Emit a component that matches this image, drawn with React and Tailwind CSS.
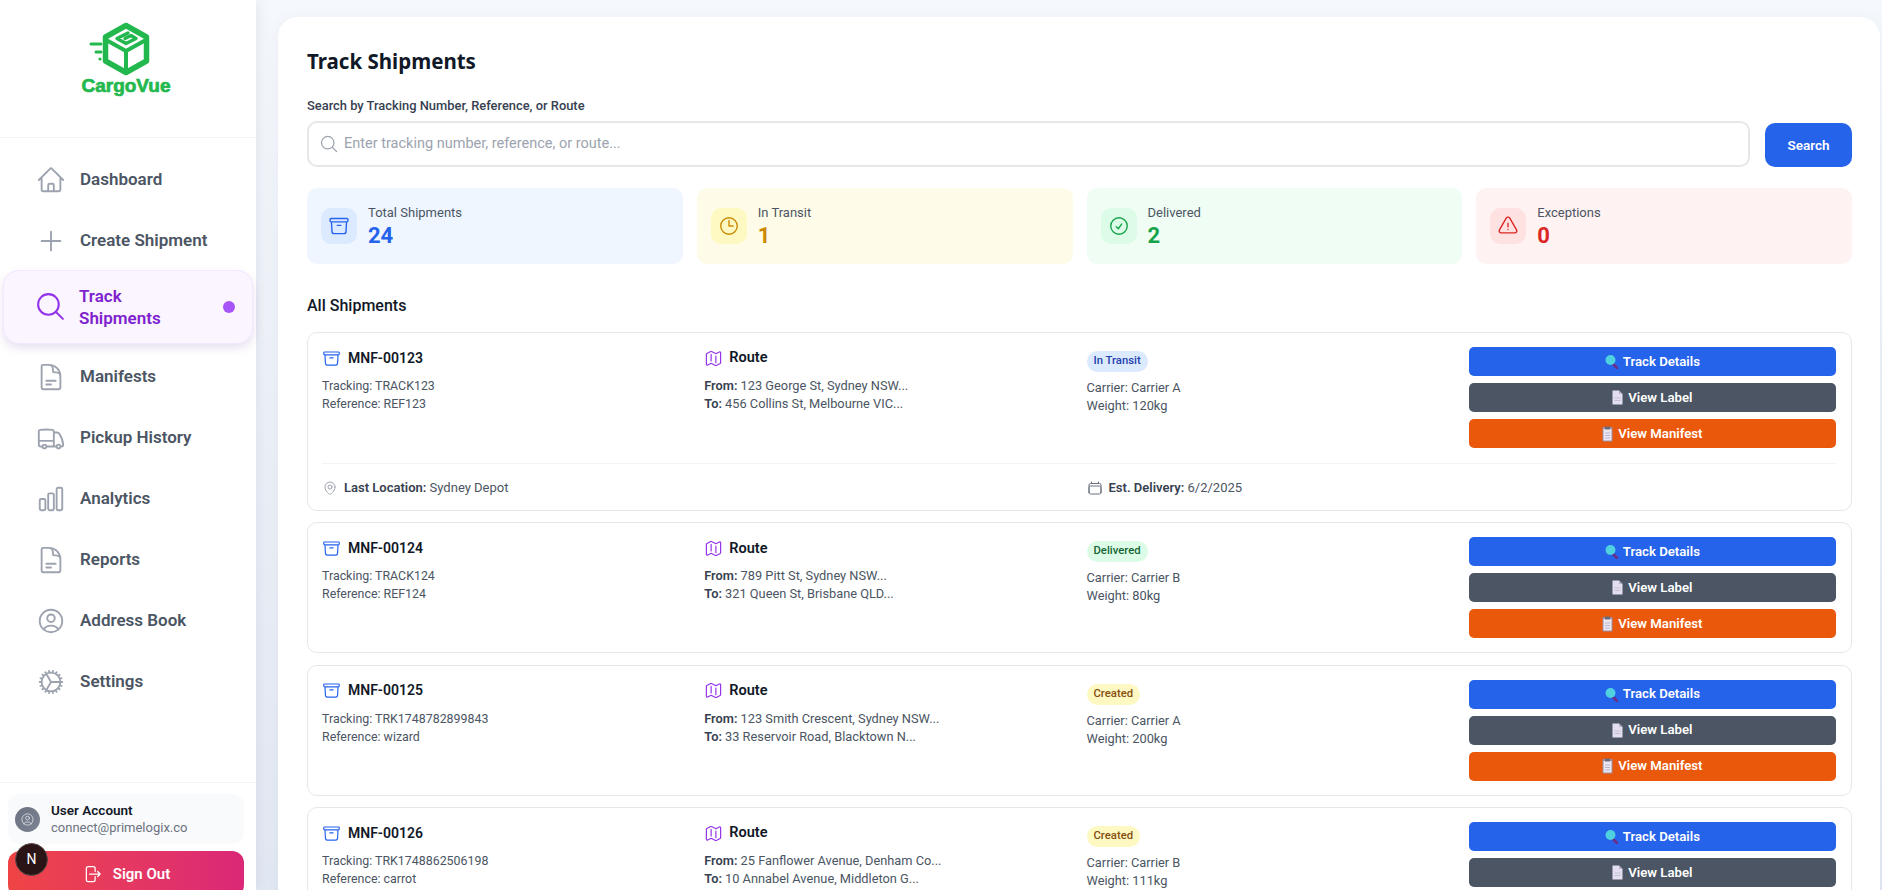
import {
  HiOutlineHome,
  HiOutlinePlus,
  HiOutlineMagnifyingGlass,
  HiOutlineDocumentText,
  HiOutlineTruck,
  HiOutlineChartBar,
  HiOutlineUserCircle,
  HiOutlineCog,
  HiOutlineArchiveBox,
  HiOutlineClock,
  HiOutlineCheckCircle,
  HiOutlineExclamationTriangle,
  HiOutlineMap,
  HiOutlineMapPin,
  HiOutlineCalendar,
  HiOutlineArrowRightOnRectangle,
} from 'react-icons/hi2';

const navItems = [
  { label: 'Dashboard', icon: HiOutlineHome },
  { label: 'Create Shipment', icon: HiOutlinePlus },
  { label: 'Track Shipments', icon: HiOutlineMagnifyingGlass, active: true },
  { label: 'Manifests', icon: HiOutlineDocumentText },
  { label: 'Pickup History', icon: HiOutlineTruck },
  { label: 'Analytics', icon: HiOutlineChartBar },
  { label: 'Reports', icon: HiOutlineDocumentText },
  { label: 'Address Book', icon: HiOutlineUserCircle },
  { label: 'Settings', icon: HiOutlineCog },
];

const stats = [
  { label: 'Total Shipments', value: '24', icon: HiOutlineArchiveBox, bg: 'bg-[#eff6ff]', box: 'bg-[#dbeafe]', color: 'text-[#2563eb]' },
  { label: 'In Transit', value: '1', icon: HiOutlineClock, bg: 'bg-[#fefce8]', box: 'bg-[#fef9c3]', color: 'text-[#ca8a04]' },
  { label: 'Delivered', value: '2', icon: HiOutlineCheckCircle, bg: 'bg-[#f0fdf4]', box: 'bg-[#dcfce7]', color: 'text-[#16a34a]' },
  { label: 'Exceptions', value: '0', icon: HiOutlineExclamationTriangle, bg: 'bg-[#fef2f2]', box: 'bg-[#fee2e2]', color: 'text-[#dc2626]' },
];

const shipments = [
  {
    id: 'MNF-00123',
    tracking: 'TRACK123',
    reference: 'REF123',
    from: '123 George St, Sydney NSW...',
    to: '456 Collins St, Melbourne VIC...',
    status: 'In Transit',
    statusClass: 'bg-[#dbeafe] text-[#1e40af]',
    carrier: 'Carrier A',
    weight: '120kg',
    location: 'Sydney Depot',
    delivery: '6/2/2025',
  },
  {
    id: 'MNF-00124',
    tracking: 'TRACK124',
    reference: 'REF124',
    from: '789 Pitt St, Sydney NSW...',
    to: '321 Queen St, Brisbane QLD...',
    status: 'Delivered',
    statusClass: 'bg-[#dcfce7] text-[#166534]',
    carrier: 'Carrier B',
    weight: '80kg',
  },
  {
    id: 'MNF-00125',
    tracking: 'TRK1748782899843',
    reference: 'wizard',
    from: '123 Smith Crescent, Sydney NSW...',
    to: '33 Reservoir Road, Blacktown N...',
    status: 'Created',
    statusClass: 'bg-[#fef9c3] text-[#854d0e]',
    carrier: 'Carrier A',
    weight: '200kg',
  },
  {
    id: 'MNF-00126',
    tracking: 'TRK1748862506198',
    reference: 'carrot',
    from: '25 Fanflower Avenue, Denham Co...',
    to: '10 Annabel Avenue, Middleton G...',
    status: 'Created',
    statusClass: 'bg-[#fef9c3] text-[#854d0e]',
    carrier: 'Carrier B',
    weight: '111kg',
  },
];

const Logo = () => (
  <svg width="100" height="56" viewBox="0 0 100 56" fill="none" stroke="#22b84e" strokeLinejoin="round" strokeLinecap="round">
    <path d="M50 5.5 L70.5 17 V41 L50 52.5 L29.5 41 V17 Z" strokeWidth="5.5" />
    <path d="M32 21 L50 31 L68 21 M50 31 V50" strokeWidth="4" />
    <path d="M52 13 L41 18.5 L50 23.5 L60 18.5 L55 15.5 L49 18.5" strokeWidth="3.4" />
    <path d="M15 24 H25 M20 32 H25" strokeWidth="3" />
    <circle cx="24" cy="39" r="1.6" fill="#22b84e" stroke="none" />
  </svg>
);

const TrackEmoji = () => (
  <svg width="13" height="15" viewBox="0 0 13 15">
    <path d="M7.5 9.5 L12 14" stroke="#6b2f86" strokeWidth="2.6" strokeLinecap="round" />
    <circle cx="5.5" cy="6" r="5" fill="#4fd1e0" />
  </svg>
);

const LabelEmoji = () => (
  <svg width="11" height="15" viewBox="0 0 11 15">
    <path d="M0.5 0.5 H7 L10.5 4 V14.5 H0.5 Z" fill="#e4dff0" />
    <path d="M7 0.5 V4 H10.5 Z" fill="#b9b2cc" />
    <path d="M2.5 8 H8.5 M2.5 10.5 H8.5" stroke="#c5bfd6" strokeWidth="1" />
  </svg>
);

const ManifestEmoji = () => (
  <svg width="11" height="16" viewBox="0 0 11 16">
    <rect x="0.5" y="1" width="10" height="14.5" rx="1" fill="#9a8fa6" />
    <rect x="1.5" y="3" width="8" height="11.5" fill="#ece8f2" />
    <rect x="3" y="0.5" width="5" height="3" fill="#6f6a78" />
    <path d="M3 7 H8 M3 9.5 H8 M3 12 H8" stroke="#b9b2cc" strokeWidth="1" />
  </svg>
);

const NavItem = ({ item }) => {
  const Icon = item.icon;
  if (item.active) {
    return (
      <div className="mx-[3px] -mt-[1.5px] mb-[2.5px] h-[74px] flex items-center pl-[30px] pr-[17px] rounded-[16px] bg-[#faf5ff] border border-[#f3e8ff] shadow-[0_4px_10px_rgba(88,28,135,0.14)]">
        <Icon className="w-[33px] h-[33px] text-[#9333ea] shrink-0" />
        <span className="ml-[12px] w-[100px] text-[17px] leading-[22px] font-semibold text-[#7e22ce]">{item.label}</span>
        <span className="ml-auto w-3 h-3 rounded-full bg-[#a855f7]" />
      </div>
    );
  }
  return (
    <div className="h-[61.1px] flex items-center pl-[36px]">
      <Icon className="w-[30px] h-[30px] text-[#9ca3af] shrink-0" />
      <span className="ml-[14px] text-[17px] font-semibold text-[#4b5563]">{item.label}</span>
    </div>
  );
};

const Sidebar = () => (
  <aside className="relative w-[256px] h-full shrink-0 bg-white flex flex-col shadow-[2px_0_12px_rgba(100,116,139,0.12)]">
    <div className="h-[138px] shrink-0 border-b border-[#f3f4f6] flex flex-col items-center pt-[20px] pr-[4px]">
      <Logo />
      <span className="-mt-[2px] font-['Liberation_Sans',sans-serif] text-[19px] leading-[24px] font-bold text-[#22b84e] [-webkit-text-stroke:0.7px_#22b84e]">CargoVue</span>
    </div>
    <nav className="pt-[11px] flex-1">
      {navItems.map((item) => (
        <NavItem key={item.label} item={item} />
      ))}
    </nav>
    <div className="border-t border-[#f3f4f6] h-[108px] shrink-0 pl-[8px] pr-[12px] pt-[11px]">
      <div className="h-[50px] rounded-xl bg-[#f9fafb] flex items-center pl-[7px]">
        <div className="w-[25px] h-[25px] rounded-full bg-gradient-to-br from-[#6b7280] to-[#7b8494] flex items-center justify-center">
          <HiOutlineUserCircle className="w-[15px] h-[15px] text-[#d1d5db]" />
        </div>
        <div className="ml-[11px]">
          <div className="text-[13.5px] leading-[18px] font-semibold text-[#111827]">User Account</div>
          <div className="text-[13px] leading-[18px] text-[#6b7280]">connect@primelogix.co</div>
        </div>
      </div>
      <div className="mt-[7px] h-[46px] rounded-xl bg-gradient-to-r from-[#ef4444] to-[#db2777] flex items-center justify-center gap-[11px] text-white">
        <HiOutlineArrowRightOnRectangle className="w-[20px] h-[20px]" />
        <span className="text-[15px] font-semibold">Sign Out</span>
      </div>
    </div>
    <div className="absolute left-[15px] top-[843px] w-[33px] h-[33px] rounded-full bg-[#2a1416] border border-[#5a4a4c] flex items-center justify-center text-white text-[14px]">
      N
    </div>
  </aside>
);

const StatCard = ({ stat }) => {
  const Icon = stat.icon;
  return (
    <div className={`${stat.bg} h-[76px] rounded-[10px] flex items-center pl-[14px]`}>
      <div className={`${stat.box} w-[36px] h-[36px] rounded-[10px] flex items-center justify-center`}>
        <Icon className={`${stat.color} w-[22px] h-[22px]`} />
      </div>
      <div className="ml-[11px] pt-[2px]">
        <div className="text-[13px] leading-[18px] text-[#4b5563]">{stat.label}</div>
        <div className={`${stat.color} text-[22px] leading-[28px] font-bold`}>{stat.value}</div>
      </div>
    </div>
  );
};

const ActionButton = ({ className, emoji, label }) => (
  <div className={`${className} h-[29px] rounded-[5px] flex items-center justify-center gap-[5px] text-white text-[13.2px] font-semibold`}>
    {emoji}
    <span>{label}</span>
  </div>
);

const ShipmentCard = ({ s }) => (
  <div className="border border-[#e5e7eb] rounded-[10px] pl-[14px] pr-[15px] py-[14px] bg-white">
    <div className="grid grid-cols-4 gap-[15px]">
      <div>
        <div className="flex items-center h-[22px]">
          <HiOutlineArchiveBox className="w-[19px] h-[19px] text-[#2563eb]" />
          <span className="ml-[7px] text-[14px] font-semibold text-[#111827]">{s.id}</span>
        </div>
        <div className="mt-[8px] text-[12.4px] leading-[18px] text-[#4b5563]">
          <div>Tracking: {s.tracking}</div>
          <div>Reference: {s.reference}</div>
        </div>
      </div>
      <div>
        <div className="flex items-center h-[22px]">
          <HiOutlineMap className="w-[19px] h-[19px] text-[#9333ea]" />
          <span className="ml-[6px] text-[14.5px] font-semibold text-[#111827]">Route</span>
        </div>
        <div className="mt-[8px] text-[12.8px] leading-[18px] text-[#4b5563]">
          <div><span className="font-semibold text-[#374151]">From:</span> {s.from}</div>
          <div><span className="font-semibold text-[#374151]">To:</span> {s.to}</div>
        </div>
      </div>
      <div>
        <span className={`${s.statusClass} inline-flex items-center h-[21px] px-[7px] rounded-full text-[11.3px] font-medium mt-[2px]`}>{s.status}</span>
        <div className="mt-[7px] text-[12.8px] leading-[18px] text-[#4b5563]">
          <div>Carrier: {s.carrier}</div>
          <div>Weight: {s.weight}</div>
        </div>
      </div>
      <div className="flex flex-col gap-[7px]">
        <ActionButton className="bg-[#2563eb]" emoji={<TrackEmoji />} label="Track Details" />
        <ActionButton className="bg-[#4b5563]" emoji={<LabelEmoji />} label="View Label" />
        <ActionButton className="bg-[#ea580c]" emoji={<ManifestEmoji />} label="View Manifest" />
      </div>
    </div>
    {s.location && (
      <div className="mt-[15px] pt-[15px] -mb-[1px] border-t border-[#f3f4f6] grid grid-cols-2 gap-[15px] text-[13px] leading-[18px] text-[#4b5563]">
        <div className="flex items-center">
          <HiOutlineMapPin className="w-[16px] h-[16px] text-[#9ca3af]" />
          <span className="ml-[6px]"><span className="font-semibold text-[#374151]">Last Location:</span> {s.location}</span>
        </div>
        <div className="flex items-center">
          <HiOutlineCalendar className="w-[16px] h-[16px] text-[#6b7280]" />
          <span className="ml-[6px]"><span className="font-semibold text-[#374151]">Est. Delivery:</span> {s.delivery}</span>
        </div>
      </div>
    )}
  </div>
);

const App = () => (
  <div className="flex w-full h-[890px] overflow-hidden bg-gradient-to-b from-[#f5f8fc] to-[#e3e9f3] font-['Roboto',sans-serif]">
    <Sidebar />
    <main className="flex-1 min-w-0 pl-[22px] pr-[2px] pt-[17px]">
      <div className="bg-white rounded-[20px] shadow-[0_4px_16px_rgba(100,116,139,0.08)] pl-[29px] pr-[28px] pt-[28px] h-[900px] overflow-hidden">
        <h1 className="font-['Noto_Sans',sans-serif] text-[20.5px] leading-[32px] font-bold text-[#111827]">Track Shipments</h1>
        <label className="block mt-[19px] text-[12.9px] leading-[20px] font-medium text-[#374151]">Search by Tracking Number, Reference, or Route</label>
        <div className="mt-[5px] flex items-center gap-[15px]">
          <div className="flex-1 h-[46px] border-2 border-[#e5e7eb] rounded-[10px] flex items-center pl-[10px]">
            <HiOutlineMagnifyingGlass className="w-[20px] h-[20px] text-[#9ca3af]" />
            <span className="ml-[5px] text-[14.5px] text-[#9ca3af]">Enter tracking number, reference, or route...</span>
          </div>
          <button className="w-[87px] h-[44px] mt-[2px] bg-[#2563eb] rounded-[10px] text-white text-[13.5px] font-semibold">Search</button>
        </div>
        <div className="mt-[21px] grid grid-cols-4 gap-[14px]">
          {stats.map((stat) => (
            <StatCard key={stat.label} stat={stat} />
          ))}
        </div>
        <h2 className="mt-[30px] text-[16px] leading-[24px] font-medium text-[#111827]">All Shipments</h2>
        <div className="mt-[14px] flex flex-col gap-[11.4px]">
          {shipments.map((s) => (
            <ShipmentCard key={s.id} s={s} />
          ))}
        </div>
      </div>
    </main>
  </div>
);

export default App;
